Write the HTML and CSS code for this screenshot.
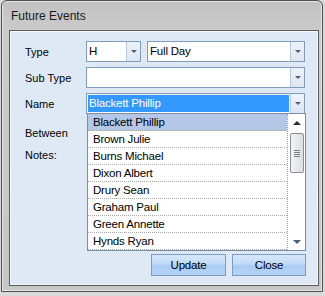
FILE: index.html
```html
<!DOCTYPE html>
<html lang="en">
<head>
  <meta charset="UTF-8">
  <title>Future Events</title>
  <link rel="stylesheet" href="styles.css">
</head>
<body>

  <div class="window">
    <div class="titlebar">Future Events</div>

    <div class="client">
      <div class="form">
        <div class="row">
          <span class="label">Type</span>
          <div class="combo combo-type"><span class="value">H</span><span class="drop"><i></i></span></div>
          <div class="combo combo-day"><span class="value">Full Day</span><span class="drop"><i></i></span></div>
        </div>
        <div class="row">
          <span class="label">Sub Type</span>
          <div class="combo combo-wide"><span class="value"></span><span class="drop"><i></i></span></div>
        </div>
        <div class="row">
          <span class="label">Name</span>
          <div class="combo combo-wide open"><span class="value selected">Blackett Phillip</span><span class="drop"><i></i></span></div>
        </div>
        <div class="row row-between">
          <span class="label">Between</span>
        </div>
        <div class="row row-notes">
          <span class="label">Notes:</span>
        </div>
      </div>

      <div class="buttons">
        <button class="btn btn-update">Update</button>
        <button class="btn btn-close">Close</button>
      </div>

      <!-- open drop-down list of the Name combo -->
      <div class="popup">
        <ul class="items">
          <li class="active">Blackett Phillip</li>
          <li>Brown Julie</li>
          <li>Burns Michael</li>
          <li>Dixon Albert</li>
          <li>Drury Sean</li>
          <li>Graham Paul</li>
          <li>Green Annette</li>
          <li>Hynds Ryan</li>
        </ul>
        <div class="scrollbar">
          <span class="arrow arrow-up"></span>
          <span class="thumb"><b></b><b></b><b></b><b></b></span>
          <span class="track"></span>
          <span class="arrow arrow-down"></span>
        </div>
      </div>
    </div>
  </div>

</body>
</html>
```

FILE: styles.css
```css
/* Common styles */
body {
  margin: 0;
  background-color: #d9d9d9;
  font-family: "Liberation Sans", Arial, sans-serif;
  font-size: 11px;
  color: #000;
}

/* Window frame */
.window {
  box-sizing: border-box;
  width: 322px;
  height: 292px;
  margin-left: 1px;
  border: 1px solid #4f4f4f;
  border-radius: 6px 6px 0 0;
  background: linear-gradient(#c2c2c2, #cbcbcb 30px, #c6c6c6);
  box-shadow: inset 0 0 0 1px #e6e6e6;
  display: flex;
  flex-direction: column;
}

.titlebar {
  height: 29px;
  padding-left: 9px;
  line-height: 30px;
  font-size: 12px;
  color: #1a1a1a;
}

.client {
  position: relative;
  box-sizing: border-box;
  margin: 0 3px 5px 7px;
  flex: 1;
  background-color: #dfe9f6;
  border: 1px solid #5d5d5d;
  box-shadow: inset 0 0 0 1px #f4f8fd;
  display: flex;
  flex-direction: column;
}

/* Form rows */
.form {
  padding: 10px 12px 0 15px;
  display: flex;
  flex-direction: column;
  gap: 5px;
}

.row {
  display: flex;
  align-items: center;
  height: 21px;
}

.label {
  width: 61px;
  flex-shrink: 0;
}

.row-between {
  margin-top: 3px;
}

.row-notes {
  margin-top: 1px;
  align-items: flex-start;
}

/* Combo boxes */
.combo {
  box-sizing: border-box;
  height: 21px;
  border: 1px solid #7f9db9;
  background-color: #fff;
  display: flex;
  align-items: stretch;
}

.combo-type {
  width: 55px;
  margin-right: 6px;
}

.combo-day {
  width: 158px;
}

.combo-wide {
  width: 219px;
}

.combo .value {
  flex: 1;
  padding-left: 2px;
  line-height: 19px;
  font-size: 11.5px;
  letter-spacing: -0.2px;
  white-space: nowrap;
  overflow: hidden;
}

.combo .value.selected {
  margin: 1px;
  padding-left: 1px;
  line-height: 17px;
  background-color: #3399ff;
  color: #fff;
}

.combo .drop {
  width: 13px;
  border-left: 1px solid #b9c9dc;
  background: linear-gradient(#eef3fa, #dce6f3);
  display: flex;
  align-items: center;
  justify-content: center;
}

.combo .drop i {
  width: 0;
  height: 0;
  border-left: 3px solid transparent;
  border-right: 3px solid transparent;
  border-top: 3px solid #4e5d78;
}

/* Drop-down list */
.popup {
  position: absolute;
  left: 77px;
  top: 82px;
  box-sizing: border-box;
  width: 219px;
  height: 138px;
  border: 1px solid #7a8ea8;
  background-color: #fff;
  display: flex;
}

.items {
  list-style: none;
  margin: 0;
  padding: 0;
  flex: 1;
  border-right: 1px dotted #a0a0a0;
  font-size: 11.5px;
  letter-spacing: -0.2px;
}

.items li {
  height: 16px;
  line-height: 17px;
  padding-left: 5px;
  border-bottom: 1px dotted #a8a8a8;
  white-space: nowrap;
}

.items li.active {
  background-color: #b4c7e7;
}

.scrollbar {
  width: 17px;
  display: flex;
  flex-direction: column;
  align-items: center;
}

.arrow {
  width: 0;
  height: 0;
  border-left: 4px solid transparent;
  border-right: 4px solid transparent;
}

.arrow-up {
  margin-top: 7px;
  border-bottom: 4px solid #2b2b2b;
}

.arrow-down {
  margin-bottom: 6px;
  border-top: 4px solid #4e5d78;
}

.thumb {
  box-sizing: border-box;
  width: 14px;
  height: 40px;
  margin-top: 8px;
  border: 1px solid #8b9097;
  border-radius: 2px;
  background: linear-gradient(90deg, #f3f3f3, #dadde2);
  display: flex;
  flex-direction: column;
  align-items: center;
  justify-content: center;
  gap: 1px;
}

.thumb b {
  width: 6px;
  height: 1px;
  background-color: #7b7f86;
}

.track {
  flex: 1;
}

/* Buttons */
.buttons {
  margin-top: auto;
  padding: 0 12px 9px 0;
  display: flex;
  justify-content: flex-end;
  gap: 6px;
}

.btn {
  box-sizing: border-box;
  height: 22px;
  border: 1px solid #7b9cc4;
  border-radius: 0;
  background: linear-gradient(#d7e7fb, #c1daf8 45%, #a9cbf4 55%, #b5d3f7);
  font-family: "Liberation Sans", Arial, sans-serif;
  font-size: 11.5px;
  letter-spacing: -0.2px;
  color: #000;
  padding: 0;
}

.btn-update {
  width: 75px;
}

.btn-close {
  width: 74px;
}
```
